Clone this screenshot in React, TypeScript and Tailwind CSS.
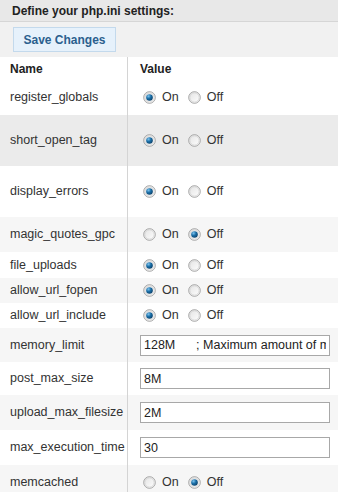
import React from "react";

type Row = {
  name: string;
  h: string;
  bg: string;
  kind: "radio" | "text";
  on?: boolean;
  value?: string;
};

const rows: Row[] = [
  { name: "register_globals", h: "h-[35px]", bg: "bg-white", kind: "radio", on: true },
  { name: "short_open_tag", h: "h-[51px]", bg: "bg-[#ebebeb]", kind: "radio", on: true },
  { name: "display_errors", h: "h-[51px]", bg: "bg-white", kind: "radio", on: true },
  { name: "magic_quotes_gpc", h: "h-[35px]", bg: "bg-[#f6f6f6]", kind: "radio", on: false },
  { name: "file_uploads", h: "h-[26px]", bg: "bg-white", kind: "radio", on: true },
  { name: "allow_url_fopen", h: "h-[25px]", bg: "bg-[#f6f6f6]", kind: "radio", on: true },
  { name: "allow_url_include", h: "h-[25px]", bg: "bg-white", kind: "radio", on: true },
  {
    name: "memory_limit",
    h: "h-[34px]",
    bg: "bg-[#f6f6f6]",
    kind: "text",
    value: "128M      ; Maximum amount of memory a script may consume",
  },
  { name: "post_max_size", h: "h-[33px]", bg: "bg-white", kind: "text", value: "8M" },
  { name: "upload_max_filesize", h: "h-[35px]", bg: "bg-[#f6f6f6]", kind: "text", value: "2M" },
  { name: "max_execution_time", h: "h-[35px]", bg: "bg-white", kind: "text", value: "30" },
  { name: "memcached", h: "h-[35px]", bg: "bg-[#f6f6f6]", kind: "radio", on: false },
];

function Radio({ checked }: { checked: boolean }) {
  return (
    <svg width="13" height="13" viewBox="0 0 13 13" className="shrink-0">
      <defs>
        <linearGradient id="rb" x1="0" y1="0" x2="1" y2="1">
          <stop offset="0" stopColor="#e2e2e2" />
          <stop offset="1" stopColor="#ffffff" />
        </linearGradient>
        <radialGradient id="rd" cx="0.35" cy="0.3" r="0.8">
          <stop offset="0" stopColor="#7fc4ee" />
          <stop offset="0.45" stopColor="#1a6fa8" />
          <stop offset="1" stopColor="#0a3a60" />
        </radialGradient>
      </defs>
      <circle cx="6.5" cy="6.5" r="5.8" fill="url(#rb)" stroke="#9c9c9c" strokeWidth="0.9" />
      <circle cx="6.5" cy="6.5" r="4.6" fill="none" stroke="#d4d4d4" strokeWidth="0.8" />
      {checked && <circle cx="6.5" cy="6.5" r="3.3" fill="url(#rd)" />}
    </svg>
  );
}

function Toggle({ on }: { on: boolean }) {
  return (
    <div className="flex items-center pl-[3px]">
      <Radio checked={on} />
      <span className="ml-[6px]">On</span>
      <span className="ml-[9px]">
        <Radio checked={!on} />
      </span>
      <span className="ml-[6px]">Off</span>
    </div>
  );
}

export default function App() {
  return (
    <div
      className="w-[338px] h-[492px] overflow-hidden bg-white text-[12.5px] text-[#333]"
      style={{ fontFamily: '"Liberation Sans", Arial, sans-serif' }}
    >
      <div className="h-[22px] bg-[#e8e8e8] border-b border-[#d6d6d6] pl-[12px] flex items-center font-bold text-[12px] text-[#222]">
        Define your php.ini settings:
      </div>
      <div className="h-[35px] bg-[#f1f1f1] pl-[13px] flex items-center">
        <button className="h-[25px] w-[103px] bg-[#e6f1fb] border border-[#c3d9ec] text-[#2b5f8e] font-bold text-[12px]">
          Save Changes
        </button>
      </div>
      <div className="flex h-[23px] items-center bg-white font-bold text-[12px] text-[#222]">
        <div className="w-[128px] h-full flex items-center pl-[10px] border-r border-[#d4d4d4]">Name</div>
        <div className="pl-[12px]">Value</div>
      </div>
      {rows.map((r) => (
        <div key={r.name} className={`flex ${r.h} ${r.bg}`}>
          <div className="w-[128px] shrink-0 h-full flex items-center pl-[10px] border-r border-[#d4d4d4]">
            {r.name}
          </div>
          <div className="flex-1 flex items-center pl-[12px] pr-[8px]">
            {r.kind === "radio" ? (
              <Toggle on={!!r.on} />
            ) : (
              <input
                readOnly
                value={r.value}
                className="w-[190px] h-[21px] border border-[#a8a8a8] bg-white px-[3px] text-[12.5px] text-[#222] outline-none whitespace-pre"
                style={{ fontFamily: '"Liberation Sans", Arial, sans-serif' }}
              />
            )}
          </div>
        </div>
      ))}
    </div>
  );
}
